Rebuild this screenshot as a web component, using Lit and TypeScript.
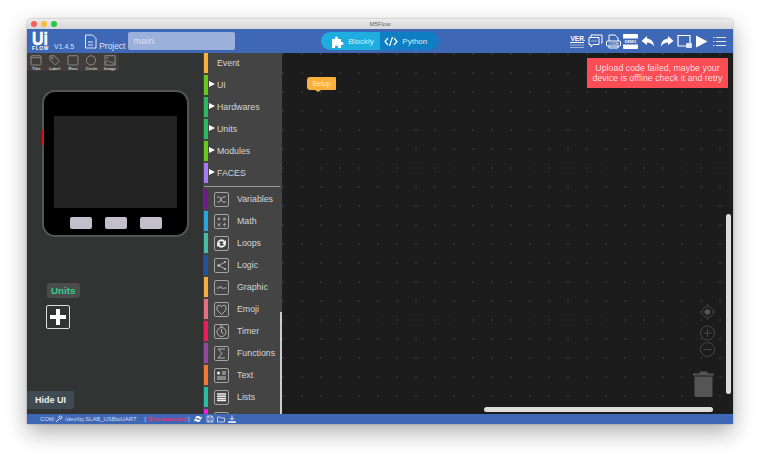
import { LitElement, html, css, svg } from "lit";
import { customElement } from "lit/decorators.js";

const cats: [string, string, boolean][] = [
  ["Event", "#f9b13e", false],
  ["UI", "#66c91b", true],
  ["Hardwares", "#2fb862", true],
  ["Units", "#2fb862", true],
  ["Modules", "#66c91b", true],
  ["FACES", "#a779f0", true],
];

const s = (c: unknown) => html`<svg class="tbi" viewBox="0 0 15 15">
  <rect x=".5" y=".5" width="14" height="14" rx="1.500" fill="none" stroke="#a5a5a5"/>${c}</svg>`;
const blocks: [string, string, unknown][] = [
  ["Variables", "#6d1d87", s(svg`<path d="M3 5h2c2 0 2 5 4 5h3M3 10h2c2 0 2-5 4-5h3" fill="none" stroke="#ccc" stroke-width=".8"/>`)],
  ["Math", "#2ba5de", s(svg`<path d="M3.500 5h3M5 3.500v3M9 4.300h3M9 5.800h3M3.500 9.500l3 2.500M6.500 9.500l-3 2.500M9 10.700h3" fill="none" stroke="#ccc" stroke-width=".8"/><circle cx="10.500" cy="9.300" r=".5" fill="#ccc"/><circle cx="10.500" cy="12.100" r=".5" fill="#ccc"/>`)],
  ["Loops", "#45bda5", s(svg`<path d="M3 7a4.500 4.500 0 0 1 8-2l1-1v4H8l1.500-1.500A2.500 2.500 0 0 0 5 7zM12 8a4.500 4.500 0 0 1-8 2l-1 1V7h4L5.500 8.500A2.500 2.500 0 0 0 10 8z" fill="#eee"/>`)],
  ["Logic", "#23519a", s(svg`<path d="M11 4 5 7.500l6 3.500" fill="none" stroke="#ccc" stroke-width=".8"/><circle cx="4.500" cy="7.500" r="1.200" fill="#ccc"/><circle cx="11" cy="4" r=".9" fill="#ccc"/><circle cx="11" cy="11" r=".9" fill="#ccc"/>`)],
  ["Graphic", "#f5ad3b", s(svg`<path d="M2.500 8h3l1-2 2 3 1-1h3" fill="none" stroke="#ccc" stroke-width=".8"/>`)],
  ["Emoji", "#e7707f", s(svg`<path d="M7.500 12.500 3 8V4.500l2-1.500 2.500 1.500L10 3l2 1.500V8z" fill="none" stroke="#ccc" stroke-width=".8"/>`)],
  ["Timer", "#ec1c5f", s(svg`<circle cx="7.500" cy="8" r="4.500" fill="none" stroke="#ccc" stroke-width=".8"/><path d="M7.500 5v3.500l2 1M6 2h3" fill="none" stroke="#ccc" stroke-width=".8"/>`)],
  ["Functions", "#8e4c9e", s(svg`<path d="M11 3H4l4 4.500L4 12h7" fill="none" stroke="#ccc" stroke-width=".8"/>`)],
  ["Text", "#ee7a36", s(svg`<circle cx="4.500" cy="5" r="1.500" fill="#eee"/><path d="M8 4h4M8 6h4M3 9h9M3 11h9" fill="none" stroke="#eee" stroke-width=".8"/>`)],
  ["Lists", "#2abba5", s(svg`<path d="M3 4h9M3 6.200h9M3 8.400h9M3 10.600h9" fill="none" stroke="#eee" stroke-width="1.500"/>`)],
  ["", "#e61fd9", s(svg``)],
];

const shapes: [string, unknown][] = [
  ["Title", svg`<rect x="1" y="1" width="13" height="12" rx="1" fill="none" stroke="#a0a0a0"/><path d="M1 3.500h13" stroke="#a0a0a0"/>`],
  ["Label", svg`<path d="M1 1h6l6 7-5 5-7-7z" fill="none" stroke="#a0a0a0"/><circle cx="4" cy="4" r="1" fill="none" stroke="#a0a0a0"/>`],
  ["Rect", svg`<rect x="1" y="1" width="13" height="12" rx="1" fill="none" stroke="#a0a0a0"/>`],
  ["Circle", svg`<circle cx="7.500" cy="7" r="6" fill="none" stroke="#a0a0a0"/>`],
  ["Image", svg`<rect x="1" y="1" width="13" height="12" fill="none" stroke="#a0a0a0"/><path d="M1 11l4-4 3 3 2-1 4 3" fill="none" stroke="#a0a0a0"/><circle cx="4" cy="4" r="1" fill="#a0a0a0"/>`],
];

@customElement("app-root")
export class AppRoot extends LitElement {
  static styles = css`
    :host { display: block; width: 760px; height: 460px; background: #fff; overflow: hidden;
      font-family: "Liberation Sans", Arial, sans-serif; padding: 19px 27px 36px; box-sizing: border-box; }
    .win { width: 706px; height: 405px; display: flex; flex-direction: column; border-radius: 4px 4px 0 0;
      box-shadow: 0 8px 22px rgba(0,0,0,.33), 0 0 2px rgba(0,0,0,.35); overflow: hidden; }
    .title { height: 10px; flex: none; background: linear-gradient(#ebebeb, #d6d6d6); position: relative;
      display: flex; align-items: center; justify-content: center; font-size: 6px; color: #666; }
    .lights { position: absolute; left: 4px; top: 2px; display: flex; gap: 4px; }
    .lights i { width: 6px; height: 6px; border-radius: 50%; }
    .head { height: 24px; flex: none; background: #3e67b5; display: flex; align-items: center; color: #dfe6f4; position: relative; }
    .logo { margin-left: 5px; width: 22px; height: 20px; display: flex; flex-direction: column; color: #fff; line-height: 1; font-weight: 700; }
    .logo b { font-size: 19px; height: 15px; line-height: 15px; transform: scaleX(.84); transform-origin: left; -webkit-text-stroke: .5px #fff; }
    .logo span { font-size: 4.800px; letter-spacing: .7px; line-height: 5px; }
    .ver { font-size: 7px; margin-left: 0; align-self: flex-end; margin-bottom: 3px; }
    .doc { margin-left: 10px; width: 13px; height: 15px; }
    .proj { font-size: 8.400px; margin-left: 2px; align-self: flex-end; margin-bottom: 2px; }
    .name { margin-left: 3px; width: 107px; height: 18px; background: #9bb0db; border-radius: 2px; color: #d8e1f3;
      font-size: 9.500px; padding-left: 5px; box-sizing: border-box; line-height: 18px; }
    .sw { margin-left: 86px; display: flex; height: 18px; width: 118px; border-radius: 9px; overflow: hidden; font-size: 8px; }
    .sw div { display: flex; align-items: center; color: #dcedf8; }
    .sw .a { width: 59px; background: #1fade0; padding-left: 10px; box-sizing: border-box; gap: 4px; }
    .sw .b { flex: 1; background: #0f7ec3; padding-left: 4px; gap: 4px; }
    .tools { margin-left: auto; margin-right: 6px; display: flex; align-items: center; gap: 2.750px; }
    .tools svg { width: 15px; height: 15px; display: block; }
    .main { flex: 1; display: flex; min-height: 0; }
    .left { width: 176px; flex: none; background: #323433; display: flex; flex-direction: column; align-items: flex-start; position: relative; }
    .shapes { display: flex; background: #403d3c; height: 18px; width: 92px; padding: 2px 0 0 0; box-sizing: border-box; }
    .sh { width: 18.500px; display: flex; flex-direction: column; align-items: center; color: #ccc; font-size: 4.200px; font-weight: 700; line-height: 1; }
    .sh svg { width: 12px; height: 11px; display: block; margin-bottom: 1px; }
    .dev { margin: 19px 0 0 15px; width: 147px; height: 147px; box-sizing: border-box; border: 2px solid #555; border-radius: 13px; background: #000;
      position: relative; display: flex; flex-direction: column; align-items: center; }
    .dev::before { content: ""; position: absolute; left: -2px; top: 38px; width: 2px; height: 15px; background: #e00a1c; }
    .screen { width: 123px; height: 92px; background: #232323; margin-top: 24px; }
    .btns { display: flex; gap: 13px; margin-top: 9px; }
    .btns i { width: 22px; height: 12px; border-radius: 2px; background: #c2bfcb; }
    .units { margin: 46px 0 0 20px; background: #4c4c4c; color: #2fd18b; border-radius: 3px; font-size: 9.800px; font-weight: 700; line-height: 15px; padding: 0 4px; }
    .plus { margin: 7px 0 0 19px; width: 22px; height: 22px; border: 1px solid #ddd; border-radius: 2px; box-sizing: content-box; position: relative; }
    .plus::before, .plus::after { content: ""; position: absolute; background: #fff; }
    .plus::before { left: 3px; right: 3px; top: 9px; height: 4px; }
    .plus::after { top: 3px; bottom: 3px; left: 9px; width: 4px; }
    .hide { position: absolute; left: 0; bottom: 5px; width: 47px; height: 18px; background: #3f4a52; border-radius: 0 3px 3px 0; color: #eee;
      font-size: 9px; font-weight: 700; display: flex; align-items: center; justify-content: center; }
    .box { width: 79px; flex: none; background: #444; position: relative; overflow: hidden; padding-left: 1px; box-sizing: border-box; }
    .row { height: 22px; display: flex; color: #d6d6d6; font-size: 8.800px; }
    .bar { width: 4px; height: 20px; flex: none; margin-right: 1px; }
    .arrow { width: 0; height: 0; border-left: 6px solid #fff; border-top: 3.500px solid transparent; border-bottom: 3.500px solid transparent; margin: 6px 2px 0 0; flex: none; }
    .lab { line-height: 20px; }
    .lab.plain { margin-left: 8px; }
    .sep { height: 1px; background: #999; margin: 1px 0 2px; width: 76px; }
    .row .tbi { width: 15px; height: 15px; margin: 3px 8px 0 5px; flex: none; }
    .tsb { position: absolute; right: 0; top: 259px; bottom: 0; width: 2px; background: #ccc; }
    .canvas { flex: 1; position: relative; background-color: #1c1c1c; overflow: hidden;
      background-image: radial-gradient(circle at 1px 1px, #2f2f2f .7px, transparent 1px); background-size: 19px 19px; }
    .setup { position: absolute; left: 25px; top: 24px; width: 29px; height: 13px; background: #f9b13e; border-radius: 3px 1px 1px 3px; color: #fdeccb;
      font-size: 7px; text-align: center; line-height: 13px; }
    .setup::after { content: ""; position: absolute; left: 8px; top: 13px; border-top: 2px solid #f9b13e; border-left: 3px solid transparent; border-right: 3px solid transparent; }
    .toast { position: absolute; right: 5px; top: 5px; width: 141px; height: 30px; background: #fb4d55; color: #f9dfe0; font-size: 8.850px; line-height: 10px;
      text-align: center; padding-top: 5px; box-sizing: border-box; white-space: nowrap; }
    .vs { position: absolute; left: 444px; top: 161px; width: 5px; height: 180px; background: #ddd; border-radius: 3px; }
    .hs { position: absolute; left: 202px; top: 354px; width: 229px; height: 5px; background: #ddd; border-radius: 3px; }
    .ctrl { position: absolute; left: 417px; top: 250px; width: 17px; height: 55px; display: block; }
    .trash { position: absolute; left: 411px; top: 318px; width: 21px; height: 26px; display: block; }
    .status { height: 10px; flex: none; background: #3e67b5; display: flex; align-items: center; font-size: 5.900px; color: #d3dcf0; white-space: nowrap; }
    .status .com { margin-left: 13px; }
    .status svg { width: 8px; height: 8px; display: block; }
    .dis { color: #e8336a; font-weight: 700; }
  `;

  render() {
    return html`<div class="win">
      <div class="title">
        <div class="lights"><i style="background:#fc5b57"></i><i style="background:#fdbb2e"></i><i style="background:#27c83f"></i></div>
        M5Flow
      </div>
      <div class="head">
        <div class="logo"><b>Ui</b><span>FLOW</span></div>
        <span class="ver">V1.4.5</span>
        <svg class="doc" viewBox="0 0 13 15"><path d="M1.500 1h7l3.500 3.500V14h-10.500z" fill="none" stroke="#e3e9f6"/><path d="M4 8h5M4 11h5" stroke="#e3e9f6"/></svg>
        <span class="proj">Project</span>
        <div class="name">main</div>
        <div class="sw">
          <div class="a"><svg width="13" height="13" viewBox="0 0 13 13"><path d="M1 4h3V3a1.500 1.500 0 0 1 3 0v1h3v3h1a1.500 1.500 0 0 1 0 3h-1v3H7v-1a1.500 1.500 0 0 0-3 0v1H1z" fill="#fff"/></svg>Blockly</div>
          <div class="b"><svg width="14" height="11" viewBox="0 0 14 11"><path d="M4 2 1 5.500 4 9M10 2l3 3.500L10 9M8.500 1l-3 9" fill="none" stroke="#fff" stroke-width="1.200"/></svg>Python</div>
        </div>
        <div class="tools">
          <svg viewBox="0 0 15 15"><text x="0.500" y="7" font-size="6.500" font-weight="700" fill="#fff" font-family="Liberation Sans">VER.</text><path d="M0 8.500h14" stroke="#fff"/><path d="M0 11h14M0 13.500h14" stroke="#dfe6f4" stroke-width=".6"/></svg>
          <svg viewBox="0 0 15 15"><path d="M3 3V1h11v8h-1M1 3.500h10v7H5l-2 2.500v-2.500H1z" fill="none" stroke="#fff"/><path d="M3.500 7h1M5.500 7h1M7.500 7h1" stroke="#fff"/></svg>
          <svg viewBox="0 0 15 15"><path d="M3 7V1h6l3 3v3M3 12v2h9v-2" fill="none" stroke="#fff"/><rect x="0.500" y="7" width="14" height="5" rx="1" fill="none" stroke="#fff"/><text x="7.500" y="11" text-anchor="middle" font-size="3.500" fill="#fff" font-family="Liberation Sans">CODE</text></svg>
          <svg viewBox="0 0 15 15"><rect width="15" height="15" rx="1" fill="#fff"/><rect y="4.500" width="15" height="6" fill="#3e67b5"/><text x="7.500" y="9" text-anchor="middle" font-size="3.800" font-weight="700" fill="#fff" font-family="Liberation Sans">DEMO</text></svg>
          <svg viewBox="0 0 15 15"><path d="M6 2 .5 7 6 11V8.500c3 0 5 1 7 4 0-5-3-7.500-7-8z" fill="#fff"/></svg>
          <svg viewBox="0 0 15 15"><path d="M9 2l5.500 5L9 11V8.500c-3 0-5 1-7 4 0-5 3-7.500 7-8z" fill="#fff"/></svg>
          <svg viewBox="0 0 15 15"><path d="M1 12V1.500h12V9M1 12h8" fill="none" stroke="#fff" stroke-width="1.200"/><rect x="9" y="9" width="6" height="5" rx="1" fill="#dfe6f4"/></svg>
          <svg viewBox="0 0 15 15"><path d="M2 1.500 13.500 7.500 2 13.500z" fill="#fff"/></svg>
          <svg viewBox="0 0 15 15"><path d="M4 3.500h10M4 7.500h10M4 11.500h10M1 3.500h1.500M1 7.500h1.500M1 11.500h1.500" stroke="#dfe6f4"/></svg>
        </div>
      </div>
      <div class="main">
        <div class="left">
          <div class="shapes">${shapes.map(([n, i]) => html`<div class="sh"><svg viewBox="0 0 15 14">${i}</svg>${n}</div>`)}</div>
          <div class="dev"><div class="screen"></div><div class="btns"><i></i><i></i><i></i></div></div>
          <div class="units">Units</div>
          <div class="plus"></div>
          <div class="hide">Hide UI</div>
        </div>
        <div class="box">
          ${cats.map(([n, c, a]) => html`<div class="row"><div class="bar" style="background:${c}"></div>
            ${a ? html`<div class="arrow"></div>` : ""}<span class="lab ${a ? "" : "plain"}">${n}</span></div>`)}
          <div class="sep"></div>
          ${blocks.map(([n, c, i]) => html`<div class="row"><div class="bar" style="background:${c}"></div>${i}<span class="lab">${n}</span></div>`)}
          <div class="tsb"></div>
        </div>
        <div class="canvas">
          <div class="setup">Setup</div>
          <div class="toast">Upload code failed, maybe your<br />device is offline check it and retry</div>
          <svg class="ctrl" viewBox="0 0 17 55">
            <circle cx="8.500" cy="9" r="5.500" fill="none" stroke="#444"/><circle cx="8.500" cy="9" r="2.800" fill="#555"/><path d="M8.500 1v2M8.500 15v2M.5 9h2M14.500 9h2" stroke="#444"/>
            <circle cx="8.500" cy="30" r="7" fill="none" stroke="#484848"/><path d="M4.500 30h8M8.500 26v8" stroke="#484848"/>
            <circle cx="8.500" cy="46.500" r="7" fill="none" stroke="#484848"/><path d="M4.500 46.500h8" stroke="#484848"/>
          </svg>
          <svg class="trash" viewBox="0 0 21 26"><path d="M0 2.500h21v2H0zM6 2.500 7 .5h7l1 2z" fill="#555"/><path d="M1.500 5.500h18v19a1.500 1.500 0 0 1-1.500 1.500H3a1.500 1.500 0 0 1-1.500-1.500z" fill="#555"/></svg>
          <div class="vs"></div>
          <div class="hs"></div>
        </div>
      </div>
      <div class="status">
        <span class="com">COM:</span>
        <svg viewBox="0 0 8 8"><path d="M1 7l3-3M5.500 1a1.500 1.500 0 1 1 0 3 1.500 1.500 0 0 1 0-3z" fill="none" stroke="#dfe6f4"/></svg>
        <span>&nbsp;/dev/tty.SLAB_USBtoUART</span>
        <span style="margin-left:8px">[&nbsp;</span><span class="dis">Disconnected</span><span>&nbsp;]</span>
        <svg style="margin-left:4px" viewBox="0 0 8 8"><path d="M1 3.500a3 3 0 0 1 5.500-1L7.500 1v3H4.500l1-1M7 4.500a3 3 0 0 1-5.500 1L.5 7V4h3l-1 1" fill="#fff"/></svg>
        <svg style="margin-left:4px" viewBox="0 0 8 8"><path d="M1 1h5l1 1v5H1z" fill="none" stroke="#dfe6f4" stroke-width=".8"/><path d="M2.500 1v2h3V1M2.500 7V5h3v2" fill="none" stroke="#dfe6f4" stroke-width=".6"/></svg>
        <svg style="margin-left:3px" viewBox="0 0 8 8"><path d="M.5 2h2.500l1 1h3.500v4h-7z" fill="none" stroke="#dfe6f4" stroke-width=".8"/></svg>
        <svg style="margin-left:3px" viewBox="0 0 8 8"><path d="M4 .5v4M2 3l2 2 2-2M.5 6.500h7v1h-7z" fill="none" stroke="#fff" stroke-width=".8"/></svg>
      </div>
    </div>`;
  }
}
